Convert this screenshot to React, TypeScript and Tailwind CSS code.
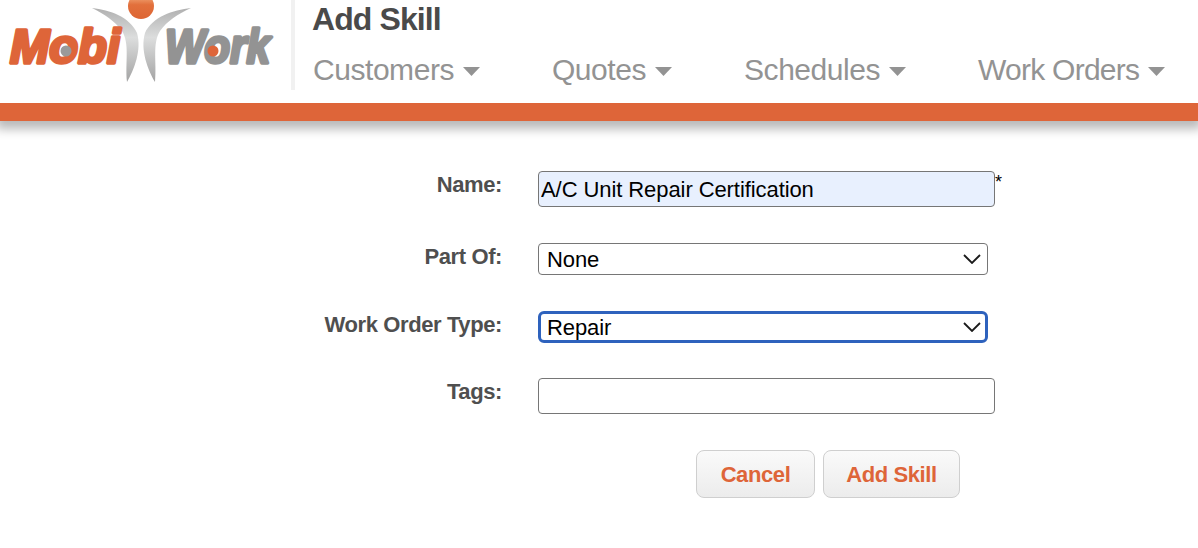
import React from "react";

const font = { fontFamily: '"Liberation Sans", Arial, sans-serif' };

function Logo() {
  return (
    <svg width="291" height="90" viewBox="0 0 291 90" aria-label="MobiWork">
      <defs>
        <linearGradient id="fig" x1="0" y1="0" x2="0" y2="1">
          <stop offset="0" stopColor="#b0b0b0" />
          <stop offset="0.4" stopColor="#dcdddd" />
          <stop offset="1" stopColor="#a3a3a3" />
        </linearGradient>
        <linearGradient id="head" x1="0" y1="0" x2="0" y2="1">
          <stop offset="0" stopColor="#f7bd8e" />
          <stop offset="0.45" stopColor="#e2703c" />
          <stop offset="1" stopColor="#dd6533" />
        </linearGradient>
      </defs>
      <circle cx="141" cy="6" r="13" fill="url(#head)" />
      <path d="M92 8C110 10 130 17 137 33C142 50 134 70 127 82C125 62 130 44 122 31C115 21 104 14 92 8Z" fill="url(#fig)" />
      <path d="M191 8C173 10 152 17 145 33C140 50 148 70 155 82C157 62 152 44 160 31C167 21 178 14 191 8Z" fill="url(#fig)" />
      <text x="10" y="63" textLength="110" lengthAdjust="spacingAndGlyphs" fontFamily="Liberation Sans" fontWeight="700" fontStyle="italic" fontSize="48" fill="#de6539" stroke="#de6539" strokeWidth="3.5" strokeLinejoin="round">Mobi</text>
      <circle cx="66" cy="51" r="5.5" fill="#9a9a9a" />
      <text x="165" y="63" textLength="105" lengthAdjust="spacingAndGlyphs" fontFamily="Liberation Sans" fontWeight="700" fontStyle="italic" fontSize="48" fill="#939393" stroke="#939393" strokeWidth="3.5" strokeLinejoin="round">Work</text>
      <circle cx="213" cy="51" r="5.5" fill="#de6539" />
    </svg>
  );
}

function NavItem({ label, tight = false }: { label: string; tight?: boolean }) {
  return (
    <a className={`flex items-center gap-[9px] text-[30px] leading-[36px] text-[#939393] ${tight ? "tracking-[-0.75px]" : "tracking-[-0.45px]"}`}>
      <span>{label}</span>
      <svg width="17" height="9" viewBox="0 0 17 9" className="mt-[3px]">
        <path d="M0 0H17L8.5 9Z" fill="#939393" />
      </svg>
    </a>
  );
}

function Chevron() {
  return (
    <svg width="18" height="10" viewBox="0 0 18 10" className="pointer-events-none absolute right-[7px] top-1/2 -translate-y-1/2">
      <path d="M1 1L9 9L17 1" fill="none" stroke="#1a1a1a" strokeWidth="1.8" />
    </svg>
  );
}

function Label({ children, className = "" }: { children: React.ReactNode; className?: string }) {
  return (
    <label className={`block pt-[2px] text-right text-[22px] font-bold leading-[24px] tracking-[-0.4px] text-[#4f4f4f] ${className}`}>
      {children}
    </label>
  );
}

export default function App() {
  return (
    <div style={font} className="h-[548px] w-[1198px] overflow-hidden bg-white">
      <header className="relative h-[121px] border-b-[18px] border-[#de6539] shadow-[0_4px_10px_4px_rgba(0,0,0,0.28)]">
        <div className="flex h-[103px] items-start">
          <div className="h-[90px] w-[295px] border-r-[4px] border-[#f1f1f1]">
            <Logo />
          </div>
          <div className="pl-[18px]">
            <h1 className="-ml-[1px] text-[32px] font-bold leading-[38px] tracking-[-0.9px] text-[#4a4a4a]">Add Skill</h1>
            <nav className="mt-[14px] flex gap-[72px]">
              <NavItem label="Customers" />
              <NavItem label="Quotes" />
              <NavItem label="Schedules" />
              <NavItem label="Work Orders" tight />
            </nav>
          </div>
        </div>
      </header>

      <main className="pt-[50px]">
        <form className="grid grid-cols-[502px_1fr] gap-x-[36px]">
          <Label>Name:</Label>
          <div className="flex items-start">
            <input
              readOnly
              value="A/C Unit Repair Certification"
              style={font}
              className="h-[36px] w-[457px] rounded-[4px] border border-[#767676] bg-[#e8f0fe] px-[2px] pt-[2px] text-[22px] tracking-[-0.08px] text-black outline-none"
            />
            <span className="mt-[3px] text-[18px] leading-[16px] text-black">*</span>
          </div>

          <Label className="mt-[36px]">Part Of:</Label>
          <div className="relative mt-[36px] h-[32px] w-[450px]">
            <select style={font} className="block h-[32px] w-full appearance-none rounded-[4px] border border-[#767676] bg-white pt-[2px] pb-0 pl-[8px] text-[22px] leading-[28px] tracking-[-0.1px] text-black outline-none">
              <option>None</option>
            </select>
            <Chevron />
          </div>

          <Label className="mt-[36px]">Work Order Type:</Label>
          <div className="relative mt-[36px] h-[32px] w-[450px]">
            <select style={font} className="block h-[32px] w-full appearance-none rounded-[6px] border-[3px] border-[#2e62bd] bg-white pt-[2px] pb-0 pl-[6px] text-[22px] leading-[24px] tracking-[-0.1px] text-black outline-none">
              <option>Repair</option>
            </select>
            <Chevron />
          </div>

          <Label className="mt-[35px]">Tags:</Label>
          <div className="mt-[35px] h-[36px]">
            <input readOnly style={font} className="block h-[36px] w-[457px] rounded-[4px] border border-[#767676] bg-white outline-none" />
          </div>
        </form>

        <div className="ml-[696px] mt-[36px] flex gap-[8px]">
          <button style={font} className="h-[48px] w-[119px] rounded-[8px] border border-[#cfcfcf] bg-gradient-to-b from-[#fafafa] to-[#ececec] text-[22px] font-bold tracking-[-0.4px] text-[#de6539]">Cancel</button>
          <button style={font} className="h-[48px] w-[137px] rounded-[8px] border border-[#cfcfcf] bg-gradient-to-b from-[#fafafa] to-[#ececec] text-[22px] font-bold tracking-[-0.4px] text-[#de6539]">Add Skill</button>
        </div>
      </main>
    </div>
  );
}
